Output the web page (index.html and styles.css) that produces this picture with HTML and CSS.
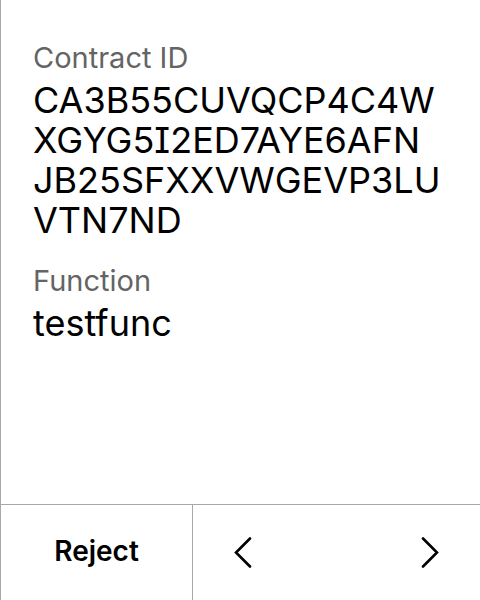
FILE: index.html
```html
<!DOCTYPE html>
<html>
<head>
<meta charset="utf-8">
<link rel="stylesheet" href="styles.css">
</head>
<body>
<div class="screen">
  <div class="content">
    <div class="field">
      <div class="label">Contract ID</div>
      <div class="value">CA3B55CUVQCP4C4W<br>XGYG5I2ED7AYE6AFN<br>JB25SFXXVWGEVP3LU<br>VTN7ND</div>
    </div>
    <div class="field">
      <div class="label">Function</div>
      <div class="value">testfunc</div>
    </div>
  </div>
  <div class="footer">
    <button class="reject">Reject</button>
    <div class="nav">
      <button class="arrow" aria-label="Previous">
        <svg width="18" height="31" viewBox="0 0 18 31"><path d="M16 1.5 L2 15.5 L16 29.5" fill="none" stroke="#000" stroke-width="2.6" stroke-linecap="round" stroke-linejoin="miter"/></svg>
      </button>
      <button class="arrow" aria-label="Next">
        <svg width="18" height="31" viewBox="0 0 18 31"><path d="M2 1.5 L16 15.5 L2 29.5" fill="none" stroke="#000" stroke-width="2.6" stroke-linecap="round" stroke-linejoin="miter"/></svg>
      </button>
    </div>
  </div>
</div>
</body>
</html>
```

FILE: styles.css
```css
html, body {
  margin: 0;
  padding: 0;
  background: #fff;
}
body {
  font-family: Inter, "Noto Sans", sans-serif;
  color: #000;
}
.screen {
  width: 480px;
  height: 600px;
  box-sizing: border-box;
  border-left: 1px solid #a8a8a8;
  display: flex;
  flex-direction: column;
}
.content {
  flex: 1;
  padding: 40px 0 0 32px;
  display: flex;
  flex-direction: column;
  gap: 23px;
}
.label {
  font-size: 29px;
  line-height: 36px;
  color: #646464;
}
.value {
  font-size: 36px;
  line-height: 40px;
  color: #000;
  font-feature-settings: "cv08" 1;
  margin-top: 4px;
}
.footer {
  height: 95px;
  border-top: 1px solid #a8a8a8;
  display: flex;
}
.reject {
  width: 192px;
  border: none;
  border-right: 1px solid #a8a8a8;
  background: #fff;
  font-family: inherit;
  font-size: 28px;
  font-weight: 600;
  color: #000;
  padding: 0 0 3px;
}
.nav {
  flex: 1;
  display: flex;
  justify-content: space-between;
  align-items: center;
  padding: 0 41px;
}
.arrow {
  border: none;
  background: none;
  padding: 0;
  display: flex;
}
```
